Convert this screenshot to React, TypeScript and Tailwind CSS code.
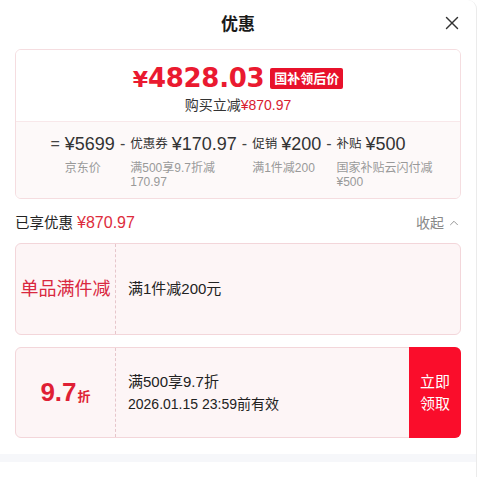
import { X, ChevronUp } from "lucide-react";

const font = { fontFamily: '"Liberation Sans", "Noto Sans CJK SC", sans-serif' };

const parts = [
  { op: "=", label: "", value: "¥5699", desc: "京东价" },
  { op: "-", label: "优惠券", value: "¥170.97", desc: "满500享9.7折减170.97" },
  { op: "-", label: "促销", value: "¥200", desc: "满1件减200" },
  { op: "-", label: "补贴", value: "¥500", desc: "国家补贴云闪付减¥500" },
];

function PriceCard() {
  return (
    <div className="rounded-[6px] border border-[#f5dde0] overflow-hidden">
      <div className="flex flex-col items-center pt-[11px] pb-[6px] bg-white">
        <div className="h-[34px] flex items-center">
          <span
            className="text-[#ea1a30] font-bold flex items-baseline"
            style={{ fontFamily: '"DejaVu Sans", sans-serif' }}
          >
            <span className="text-[22px]">¥</span>
            <span className="text-[26px] tracking-[-0.3px]">4828.03</span>
          </span>
          <span className="ml-[6px] bg-[#e8112b] text-white text-[13px] font-bold px-[4px] h-[21px] leading-[21px] rounded-[2px]">
            国补领后价
          </span>
        </div>
        <p className="text-[14px] leading-[20px] text-[#333]">
          购买立减<span className="text-[#d8202f]">¥870.97</span>
        </p>
      </div>
      <div className="border-t border-[#f8e8ea] bg-[#fdf9f9] pt-[10px] pb-[9px] flex justify-center pl-[6px]">
        {parts.map((p, i) => (
          <div key={i} className="flex items-start">
            <span className="h-[24px] leading-[24px] px-[5px] text-[16px] text-[#444]">
              {p.op}
            </span>
            <div className="flex flex-col">
              <div className="h-[24px] flex items-center text-[#333] whitespace-nowrap">
                {p.label && <span className="text-[12.5px] mr-[4px]">{p.label}</span>}
                <span className="text-[18px] font-medium">{p.value}</span>
              </div>
              <p className="mt-[5px] max-w-[100px] text-[12px] leading-[14px] text-[#999]">
                {p.desc}
              </p>
            </div>
          </div>
        ))}
      </div>
    </div>
  );
}

export default function App() {
  return (
    <div className="w-[482px] h-[477px] bg-white flex" style={font}>
      <div className="w-[477px] h-full bg-white border-r border-[#ebebeb] rounded-tr-[9px] flex flex-col">
        <div className="h-[49px] relative flex items-center justify-center">
          <h1 className="text-[17px] font-bold text-[#1a1a1a]">优惠</h1>
          <X className="absolute right-[13px] top-[12px] w-[22px] h-[22px] text-[#333]" strokeWidth={1.5} />
        </div>

        <div className="px-[15px]">
          <PriceCard />

          <div className="mt-[12px] h-[24px] flex items-center justify-between">
            <p className="text-[14.5px] text-[#222]">
              已享优惠 <span className="text-[16px] text-[#dd2c3c]">¥870.97</span>
            </p>
            <span className="flex items-center text-[14px] text-[#888]">
              收起
              <ChevronUp className="w-[14px] h-[14px] ml-[3px]" strokeWidth={1.5} />
            </span>
          </div>

          <div className="mt-[8px] h-[92px] flex rounded-[6px] border border-[#f3d6da] bg-[#fdf5f6]">
            <div className="w-[100px] flex items-center justify-center border-r border-dashed border-[#e6c6cb]">
              <span className="text-[18px] text-[#d9283f]">单品满件减</span>
            </div>
            <div className="flex-1 flex items-center pl-[12px] text-[15px] text-[#222]">
              满1件减200元
            </div>
          </div>

          <div className="mt-[12px] h-[91px] flex rounded-[6px] border border-[#f3d6da] bg-[#fdf5f6]">
            <div className="w-[100px] flex items-center justify-center border-r border-dashed border-[#e6c6cb]">
              <span className="text-[#df1f35] font-bold flex items-baseline">
                <span className="text-[26px]">9.7</span>
                <span className="text-[13px] ml-[1px]">折</span>
              </span>
            </div>
            <div className="flex-1 flex flex-col justify-center pl-[12px] text-[#222]">
              <p className="text-[15px] leading-[22px]">满500享9.7折</p>
              <p className="text-[14px] leading-[22px]">2026.01.15 23:59前有效</p>
            </div>
            <div className="w-[52px] -my-px -mr-px bg-[#fa0d2b] rounded-r-[6px] flex items-center justify-center text-white text-[15px] leading-[22px] text-center">
              立即
              <br />
              领取
            </div>
          </div>
        </div>

        <div className="mt-[16px] h-[8px] bg-[#f6f7fa]" />
      </div>
    </div>
  );
}
